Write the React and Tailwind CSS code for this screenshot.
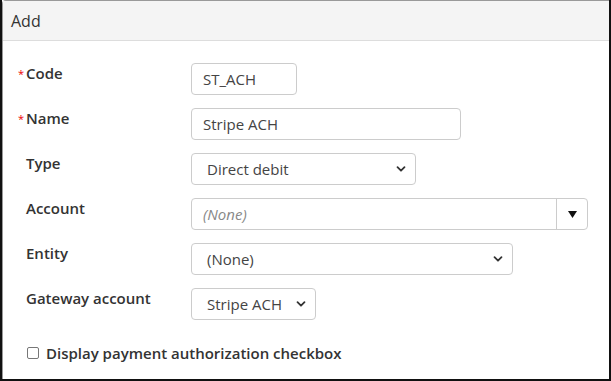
import React from 'react';

const Chevron = () => (
    <svg width="10" height="10" viewBox="0 0 10 10" className="absolute right-[10px] top-1/2 -translate-y-1/2 pointer-events-none">
        <path d="M1.5 3.2 L5 6.7 L8.5 3.2" fill="none" stroke="#333" strokeWidth="1.8" strokeLinecap="round" strokeLinejoin="round" />
    </svg>
);

const Label = ({ text, required }) => (
    <div className="w-[188px] shrink-0 flex items-start pl-[15px]">
        <span className="w-[8px] pt-[3px] text-[#e00] text-[11px] leading-[16px]">{required ? '*' : ''}</span>
        <span className="font-semibold text-[15px] leading-[20px] text-[#333]">{text}</span>
    </div>
);

const SelectBox = ({ value, width }) => (
    <div className={`relative ${width}`}>
        <select
            defaultValue={value}
            className="appearance-none w-full h-[32px] border border-[#ccc] rounded-[4px] bg-white pl-[15px] pr-[28px] text-[15px] text-[#444] outline-none"
        >
            <option>{value}</option>
        </select>
        <Chevron />
    </div>
);

const App = () => {
    return (
        <div className="w-[611px] h-[381px] bg-white font-['Open_Sans',sans-serif] border-l-2 border-r-2 border-b-2 border-[#111] overflow-hidden">
            <div className="h-full rounded-tl-[4px] border-t border-l border-[#999]">
                {/* Header */}
                <div className="h-[40px] bg-[#f4f4f4] border-b border-[#ddd] flex items-center pl-[8px]">
                    <span className="text-[16px] text-[#333]">Add</span>
                </div>

                <div className="pt-[22px] flex flex-col gap-[13px]">
                    <div className="flex items-start">
                        <Label text="Code" required />
                        <input
                            defaultValue="ST_ACH"
                            className="w-[106px] h-[32px] border border-[#ccc] rounded-[4px] px-[11px] text-[15px] text-[#444] outline-none"
                        />
                    </div>

                    <div className="flex items-start">
                        <Label text="Name" required />
                        <input
                            defaultValue="Stripe ACH"
                            className="w-[270px] h-[32px] border border-[#ccc] rounded-[4px] px-[11px] text-[15px] text-[#444] outline-none"
                        />
                    </div>

                    <div className="flex items-start">
                        <Label text="Type" />
                        <SelectBox value="Direct debit" width="w-[225px]" />
                    </div>

                    <div className="flex items-start">
                        <Label text="Account" />
                        <div className="w-[397px] h-[32px] border border-[#ccc] rounded-[4px] flex">
                            <div className="flex-1 flex items-center px-[11px] text-[15px] italic text-[#888]">(None)</div>
                            <div className="w-[31px] border-l border-[#ccc] flex items-center justify-center">
                                <svg width="9" height="7" viewBox="0 0 9 7">
                                    <path d="M0 0 H9 L4.5 7 Z" fill="#111" />
                                </svg>
                            </div>
                        </div>
                    </div>

                    <div className="flex items-start">
                        <Label text="Entity" />
                        <SelectBox value="(None)" width="w-[322px]" />
                    </div>

                    <div className="flex items-start">
                        <Label text="Gateway account" />
                        <SelectBox value="Stripe ACH" width="w-[125px]" />
                    </div>
                </div>

                <label className="flex items-center mt-[22px] pl-[24px] gap-[7px]">
                    <span className="w-[12px] h-[12px] border border-[#777] rounded-[2px] bg-white"></span>
                    <span className="font-semibold text-[15px] text-[#333]">Display payment authorization checkbox</span>
                </label>
            </div>
        </div>
    );
};

export default App;
